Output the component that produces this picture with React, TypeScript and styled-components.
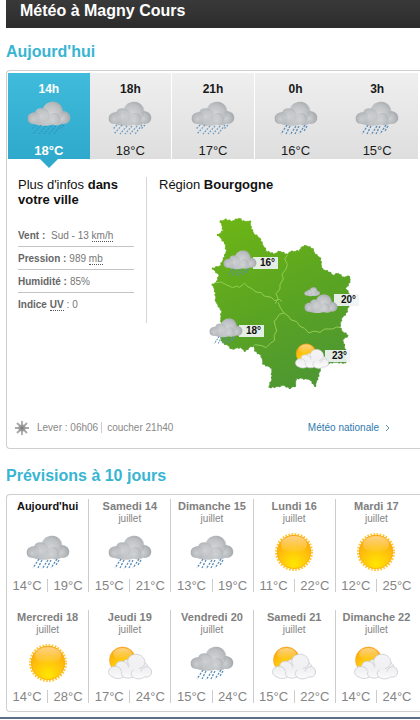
import React from "react";
import styled, { createGlobalStyle } from "styled-components";

const GlobalStyle = createGlobalStyle`
  * { box-sizing: border-box; }
  body {
    margin: 0;
    background: #fff;
    color: #1a1a1a;
    font-family: "Liberation Sans", Arial, sans-serif;
    font-size: 11px;
  }
  h1, h2, h3, p, dl, dd, ul { margin: 0; padding: 0; }
`;

type Sky = "rain" | "heavy" | "light" | "cloud" | "partly" | "sun";

/* ---------- weather drawings ---------- */

const Gradients = () => (
  <svg width="0" height="0" display="block" aria-hidden="true">
    <defs>
      <radialGradient id="grey" gradientUnits="userSpaceOnUse" cx="22" cy="15" r="22">
        <stop offset="0" stopColor="#d0d2d4" />
        <stop offset="0.5" stopColor="#bfc2c4" />
        <stop offset="1" stopColor="#aaadb0" />
      </radialGradient>
      <radialGradient id="lobe" cx="0.4" cy="0.6" r="0.6">
        <stop offset="0" stopColor="#d6d8da" stopOpacity="0.7" />
        <stop offset="0.7" stopColor="#c0c3c5" stopOpacity="0.3" />
        <stop offset="1" stopColor="#9ea2a5" stopOpacity="0.45" />
      </radialGradient>
      <linearGradient id="white" gradientUnits="userSpaceOnUse" x1="0" y1="8" x2="0" y2="33">
        <stop offset="0" stopColor="#f4f4f6" />
        <stop offset="0.6" stopColor="#f0f0f2" />
        <stop offset="1" stopColor="#fbfbfc" />
      </linearGradient>
      <radialGradient id="sun" cx="0.5" cy="0.85" r="0.85">
        <stop offset="0" stopColor="#ffe600" />
        <stop offset="0.5" stopColor="#ffc40c" />
        <stop offset="1" stopColor="#fba30a" />
      </radialGradient>
      <linearGradient id="shine" x1="0" y1="0" x2="0" y2="1">
        <stop offset="0" stopColor="#fff" stopOpacity="0.5" />
        <stop offset="1" stopColor="#fff" stopOpacity="0" />
      </linearGradient>
      <linearGradient id="land" gradientUnits="userSpaceOnUse" x1="100" y1="150" x2="330" y2="650">
        <stop offset="0" stopColor="#6cb416" />
        <stop offset="0.5" stopColor="#5ba522" />
        <stop offset="1" stopColor="#4d9632" />
      </linearGradient>
    </defs>
  </svg>
);

const Cloud = () => (
  <>
    <path
      fill="url(#grey)"
      d="M7 23C2 23 0.500 20 0.700 17C1 13 4 11.500 8 11.500C9 8 12 6.500 16 7.500C18 2.500 22 0.500 27 0.800C32 1.200 35 5 35.500 10C40 10 43.500 13 43.300 17C43 21 40 23.500 35 22.800C32 24.500 29 25 26 23.500C20 25.500 12 25 7 23Z"
    />
    <g fill="url(#lobe)">
      <circle cx="7.500" cy="17" r="6" />
      <circle cx="36.500" cy="16.500" r="6" />
      <circle cx="15.500" cy="14.500" r="7" />
      <circle cx="27" cy="10.500" r="9.500" />
      <circle cx="27" cy="18" r="6" />
    </g>
  </>
);

const Drops = ({ sky }: { sky: Sky }) => {
  if (sky === "rain")
    return (
      <g stroke="#5b8db8" strokeWidth="1.300" strokeDasharray="2.200 1.300" fill="none">
        <path d="M13 24l-6 9M16 25l-4 8M22 25l-6 9M25 25l-4 8M31 24l-6 9M33 25l-3 5" />
      </g>
    );
  return (
    <g
      stroke={sky === "light" ? "#2482ac" : "#6f9cc2"}
      strokeWidth={sky === "light" ? 0.8 : 1.3}
      strokeDasharray="1.800 1.300"
      fill="none"
    >
      <path d="M9 24l-4 4M14 24l-8 9M19 25l-7 8M24 25l-7 8M29 25l-7 8M34 24l-7 9M37 24l-4 4" />
    </g>
  );
};

const SunDisc = () => (
  <>
    <circle cx="20" cy="20" r="17.500" fill="none" stroke="#ffc63a" strokeWidth="3" strokeDasharray="1.700 1.355" />
    <circle cx="20" cy="20" r="17" fill="url(#sun)" />
    <circle cx="20" cy="20" r="16.500" fill="none" stroke="#f9ab12" strokeWidth="0.700" />
    <ellipse cx="20" cy="12.500" rx="13" ry="8.500" fill="url(#shine)" />
  </>
);

const SkySvg = styled.svg<{ $w: number }>`
  display: block;
  width: ${(p) => p.$w}px;
  height: auto;
  flex: none;
`;

const SkyIcon = ({ sky, size = 44 }: { sky: Sky; size?: number }) => {
  if (sky === "sun")
    return (
      <SkySvg $w={size - 4} viewBox="0 0 40 40" role="img" aria-label="Soleil">
        <SunDisc />
      </SkySvg>
    );
  if (sky === "partly")
    return (
      <SkySvg $w={size} viewBox="0 0 44 34" role="img" aria-label="Éclaircies">
        <circle cx="14.500" cy="14" r="13" fill="url(#sun)" stroke="#f3a52a" strokeWidth="0.600" />
        <ellipse cx="14.500" cy="8" rx="9.500" ry="6" fill="url(#shine)" />
        <path
          d="M5 31C1.500 30 0 27.500 0.700 24.500C1.300 22 4 20 7.500 20.500C8 16.500 11 14.500 15 15.500C17 14 18.500 13.500 20 13.500C21.500 9.500 25 8 29 8.300C34 9 37 12.500 37 17C38.500 17.500 39.500 19 39.500 20.500C42.500 21.500 44 24 43.500 27C43 30 40 31.500 36.500 31C33 33.500 28 33.500 25 31C22 32.500 18 32.500 15.500 31C12 33 8 33 5 31Z"
          fill="url(#white)"
          stroke="#c9c9cf"
          strokeWidth="0.800"
        />
        <path
          d="M7.500 20.500C11 20.500 13 22.500 13 25M15 15.500C18.500 16.500 20.500 18.500 20.500 21.500M20 13.500C19 16 20 18 21.500 19.500M37 17C36 20 34 22 31 22.500M39.500 20.500C36 20.500 33.500 22.500 33 25.500M25 31C22.500 29 22.500 25.500 25.500 24M15.500 31C13.500 29.500 13 27.500 14 25.500"
          fill="none"
          stroke="#d3d3d9"
          strokeWidth="1"
        />
      </SkySvg>
    );
  if (sky === "cloud")
    return (
      <SkySvg $w={size} viewBox="0 0 44 34" role="img" aria-label="Nuageux">
        <g transform="scale(0.480)">
          <Cloud />
        </g>
        <g transform="translate(0 9)">
          <Cloud />
        </g>
      </SkySvg>
    );
  return (
    <SkySvg $w={size} viewBox="0 0 44 34" role="img" aria-label="Pluie">
      <Cloud />
      <Drops sky={sky} />
    </SkySvg>
  );
};

/* ---------- page ---------- */

const Page = styled.div`
  border-bottom: 2px solid #5d6f86;
  padding-bottom: 5px;
`;

const Content = styled.main`
  padding-left: 6px;
`;

const TitleBar = styled.header`
  height: 28px;
  padding-left: 14px;
  background: linear-gradient(#393939, #2c2c2c);
  color: #fff;
`;

const Title = styled.h1`
  font-size: 16px;
  line-height: 22px;
`;

const SectionTitle = styled.h2<{ $before: number }>`
  color: #38b5d3;
  font-size: 16px;
  line-height: 20px;
  padding-top: ${(p) => p.$before}px;
  margin-bottom: 8px;
`;

const Panel = styled.section`
  border: 1px solid #cfcfcf;
  border-right: 0;
  border-radius: 4px 0 0 4px;
  padding-right: 2px;
`;

const Hours = styled.div`
  display: flex;
  padding: 2px 0 0 1px;
`;

const HourTab = styled.button<{ $active: boolean; $line: boolean }>`
  position: relative;
  flex: 1;
  min-width: 0;
  height: 86px;
  margin: 0;
  padding: 8px 0 0;
  border: 0;
  border-right: ${(p) => (p.$line ? "1px solid #fff" : "0")};
  display: flex;
  flex-direction: column;
  align-items: center;
  font-family: inherit;
  font-size: 13px;
  line-height: 16px;
  color: ${(p) => (p.$active ? "#fff" : "#1a1a1a")};
  font-weight: ${(p) => (p.$active ? "bold" : "normal")};
  background: ${(p) =>
    p.$active ? "linear-gradient(#40bbdb, #2fa9cc)" : "linear-gradient(#efefef, #dedede)"};
  ${(p) =>
    p.$active &&
    `&::after {
      content: "";
      position: absolute;
      top: 100%;
      left: 50%;
      margin-left: -9px;
      border: 9px solid transparent;
      border-top-color: #2fa9cc;
      border-bottom: 0;
    }`}
`;

const Hour = styled.strong`
  font-size: 12px;
  margin-bottom: 4px;
`;

const HourTemp = styled.span`
  margin-top: 8px;
`;

const Details = styled.div`
  display: flex;
  padding: 18px 0 0 11px;
`;

const CityInfo = styled.div`
  flex: none;
  width: 129px;
  height: 146px;
  padding-right: 12px;
  border-right: 1px solid #d4d4d4;
`;

const SubTitle = styled.h3`
  font-size: 13px;
  line-height: 15px;
  font-weight: normal;
  color: #111;
`;

const Facts = styled.dl`
  margin-top: 17px;
  color: #777;
  font-size: 10px;
`;

const Fact = styled.div`
  display: flex;
  gap: 3px;
  height: 22px;
  align-items: center;
  box-sizing: content-box;
  white-space: nowrap;
  & + & {
    border-top: 1px solid #c4c4c4;
  }
  dt {
    font-weight: bold;
    color: #666;
  }
`;

const Unit = styled.abbr`
  text-decoration: none;
  border-bottom: 1px dotted #555;
`;

const Region = styled.div`
  flex: 1;
  padding-left: 12px;
`;

const MapBox = styled.div`
  position: relative;
  width: 170px;
  height: 190px;
  margin: 17px auto 0 41px;
`;

const MapSvg = styled.svg`
  display: block;
  width: 170px;
  height: 190px;
`;

const Pin = styled.div<{ $x: number; $y: number }>`
  position: absolute;
  left: ${(p) => p.$x}px;
  top: ${(p) => p.$y}px;
  display: flex;
  align-items: center;
`;

const PinLabel = styled.span`
  margin-left: -4px;
  padding: 0 3px 0 7px;
  background: rgba(240, 243, 246, 0.92);
  color: #111;
  font-size: 10px;
  font-weight: bold;
  line-height: 12px;
`;

const PinIcon = styled.span`
  position: relative;
  z-index: 1;
`;

const PanelFoot = styled.footer`
  display: flex;
  align-items: center;
  height: 41px;
  padding: 0 28px 0 8px;
  margin-top: 8px;
  color: #888;
  font-size: 10px;
`;

const SunTime = styled.span`
  padding: 0 3px 0 8px;
  & + & {
    border-left: 1px solid #ccc;
    padding-left: 5px;
  }
`;

const NationalLink = styled.a`
  margin-left: auto;
  display: flex;
  align-items: center;
  gap: 6px;
  color: #3079ae;
  text-decoration: none;
`;

const Days = styled.ul`
  display: grid;
  grid-template-columns: repeat(5, 1fr);
  row-gap: 18px;
  padding: 4px 0 8px;
  list-style: none;
`;

const Day = styled.li<{ $last: boolean }>`
  min-width: 0;
  height: 93px;
  display: flex;
  flex-direction: column;
  align-items: center;
  border-right: 1px solid ${(p) => (p.$last ? "transparent" : "#ccc")};
  color: #858585;
  white-space: nowrap;
`;

const DayName = styled.strong<{ $today: boolean }>`
  font-size: 11px;
  line-height: 14px;
  color: ${(p) => (p.$today ? "#111" : "#808080")};
`;

const Month = styled.span`
  height: 12px;
  font-size: 10px;
  line-height: 12px;
`;

const IconSlot = styled.div`
  flex: 1;
  display: flex;
  align-items: center;
`;

const Temps = styled.div`
  display: flex;
  align-self: stretch;
  font-size: 13px;
  line-height: 13px;
  span {
    flex: 1;
    text-align: center;
  }
  span + span {
    border-left: 1px solid #ccc;
  }
`;

const hours: { hour: string; temp: string; sky: Sky }[] = [
  { hour: "14h", temp: "18°C", sky: "light" },
  { hour: "18h", temp: "18°C", sky: "heavy" },
  { hour: "21h", temp: "17°C", sky: "heavy" },
  { hour: "0h", temp: "16°C", sky: "rain" },
  { hour: "3h", temp: "15°C", sky: "rain" },
];

const pins: { x: number; y: number; temp: string; sky: Sky }[] = [
  { x: 23, y: 41, temp: "16°", sky: "rain" },
  { x: 104, y: 78, temp: "20°", sky: "cloud" },
  { x: 9, y: 109, temp: "18°", sky: "rain" },
  { x: 95, y: 134, temp: "23°", sky: "partly" },
];

const days: { name: string; month: string; low: number; high: number; sky: Sky }[] = [
  { name: "Aujourd'hui", month: "", low: 14, high: 19, sky: "rain" },
  { name: "Samedi 14", month: "juillet", low: 15, high: 21, sky: "rain" },
  { name: "Dimanche 15", month: "juillet", low: 13, high: 19, sky: "rain" },
  { name: "Lundi 16", month: "juillet", low: 11, high: 22, sky: "sun" },
  { name: "Mardi 17", month: "juillet", low: 12, high: 25, sky: "sun" },
  { name: "Mercredi 18", month: "juillet", low: 14, high: 28, sky: "sun" },
  { name: "Jeudi 19", month: "juillet", low: 17, high: 24, sky: "partly" },
  { name: "Vendredi 20", month: "juillet", low: 15, high: 24, sky: "rain" },
  { name: "Samedi 21", month: "juillet", low: 15, high: 22, sky: "partly" },
  { name: "Dimanche 22", month: "juillet", low: 14, high: 24, sky: "partly" },
];

const outline =
  "62,157 76,152 95,157 118,148 128,157 150,157 153,178 163,196 178,206 187,225 200,248 222,255 240,247 262,258 268,249 300,246 304,234 320,230 338,240 346,256 360,266 366,300 388,310 400,319 415,313 430,326 445,320 451,332 443,350 437,358 448,375 448,400 440,430 424,450 419,475 428,488 445,500 428,510 436,545 438,582 420,580 395,580 362,595 355,620 345,653 332,632 300,627 287,630 287,650 270,657 250,649 230,653 206,655 216,630 215,597 190,585 184,560 166,546 160,529 150,534 135,546 120,535 95,540 85,530 67,520 62,500 70,480 62,450 65,425 48,400 46,370 38,347 51,338 57,318 38,299 61,290 73,265 79,245 75,222 54,198 70,185";

const BurgundyMap = () => (
  <MapSvg viewBox="0 120 510 570" role="img" aria-label="Carte de la Bourgogne">
    <polygon points={outline} fill="url(#land)" stroke="url(#land)" strokeWidth="2" />
    <polygon
      points={outline}
      fill="none"
      stroke="url(#land)"
      strokeWidth="7"
      strokeLinecap="round"
      strokeDasharray="0 16 0 11 0 21"
    />
    <g fill="none" stroke="#93cc52" strokeWidth="3" strokeLinejoin="round">
      <path d="M44 341l20 -2 14 8 20 9 12 -5 8 4 16 -12 10 10 14 8 10 8 16 2 8 10 22 4 10 10 14 -4 8 6" />
      <path d="M262 258l-8 12 8 16 -4 14 -12 16 4 14 -10 16 0 14 -12 14 6 14 -4 8 -4 8" />
      <path d="M234 400l6 14 12 18 -14 4 -10 16 -6 4 4 16 4 14 -8 14 2 14 -12 8 -14 14 -12 -6 -22 -3" />
      <path d="M252 432l14 10 6 10 18 6 10 14 14 6 12 14 16 -6 18 4 14 -10 24 0 12 -6 12 2" />
    </g>
  </MapSvg>
);

const SunriseGlyph = () => (
  <svg width="14" height="14" viewBox="0 0 14 14" aria-hidden="true">
    <path d="M7 0v14M0 7h14M2 2l10 10M12 2L2 12" stroke="#a8a8a8" strokeWidth="1.800" />
    <circle cx="7" cy="7" r="3.500" fill="#999" />
    <circle cx="7" cy="7" r="1.500" fill="#7c7c7c" />
  </svg>
);

export default function App() {
  return (
    <Page>
      <GlobalStyle />
      <Gradients />
      <Content>
        <TitleBar>
          <Title>Météo à Magny Cours</Title>
        </TitleBar>

        <SectionTitle $before={14}>Aujourd'hui</SectionTitle>
        <Panel>
          <Hours>
            {hours.map((h, i) => (
              <HourTab key={h.hour} type="button" $active={i === 0} $line={i === 1 || i === 2}>
                <Hour>{h.hour}</Hour>
                <SkyIcon sky={h.sky} />
                <HourTemp>{h.temp}</HourTemp>
              </HourTab>
            ))}
          </Hours>
          <Details>
            <CityInfo>
              <SubTitle>
                Plus d'infos <strong>dans votre ville</strong>
              </SubTitle>
              <Facts>
                <Fact>
                  <dt>Vent :</dt>
                  <dd>
                    &nbsp;Sud - 13 <Unit title="kilomètres par heure">km/h</Unit>
                  </dd>
                </Fact>
                <Fact>
                  <dt>Pression :</dt>
                  <dd>
                    989 <Unit title="millibars">mb</Unit>
                  </dd>
                </Fact>
                <Fact>
                  <dt>Humidité :</dt>
                  <dd>85%</dd>
                </Fact>
                <Fact>
                  <dt>
                    Indice <Unit title="ultraviolet">UV</Unit>
                  </dt>
                  <dd>: 0</dd>
                </Fact>
              </Facts>
            </CityInfo>
            <Region>
              <SubTitle>
                Région <strong>Bourgogne</strong>
              </SubTitle>
              <MapBox>
                <BurgundyMap />
                {pins.map((p) => (
                  <Pin key={p.temp} $x={p.x} $y={p.y}>
                    <PinIcon>
                      <SkyIcon sky={p.sky} size={34} />
                    </PinIcon>
                    <PinLabel>{p.temp}</PinLabel>
                  </Pin>
                ))}
              </MapBox>
            </Region>
          </Details>
          <PanelFoot>
            <SunriseGlyph />
            <SunTime>Lever : 06h06</SunTime>
            <SunTime>coucher 21h40</SunTime>
            <NationalLink href="#nationale">
              Météo nationale
              <svg width="5" height="8" viewBox="0 0 5 8" aria-hidden="true">
                <path d="M1 1l3 3-3 3" fill="none" stroke="#5f8fa8" />
              </svg>
            </NationalLink>
          </PanelFoot>
        </Panel>

        <SectionTitle $before={17}>Prévisions à 10 jours</SectionTitle>
        <Panel>
          <Days>
            {days.map((d, i) => (
              <Day key={d.name} $last={i % 5 === 4}>
                <DayName $today={i === 0}>{d.name}</DayName>
                <Month>{d.month}</Month>
                <IconSlot>
                  <SkyIcon sky={d.sky} />
                </IconSlot>
                <Temps>
                  <span>{d.low}°C</span>
                  <span>{d.high}°C</span>
                </Temps>
              </Day>
            ))}
          </Days>
        </Panel>
      </Content>
    </Page>
  );
}
